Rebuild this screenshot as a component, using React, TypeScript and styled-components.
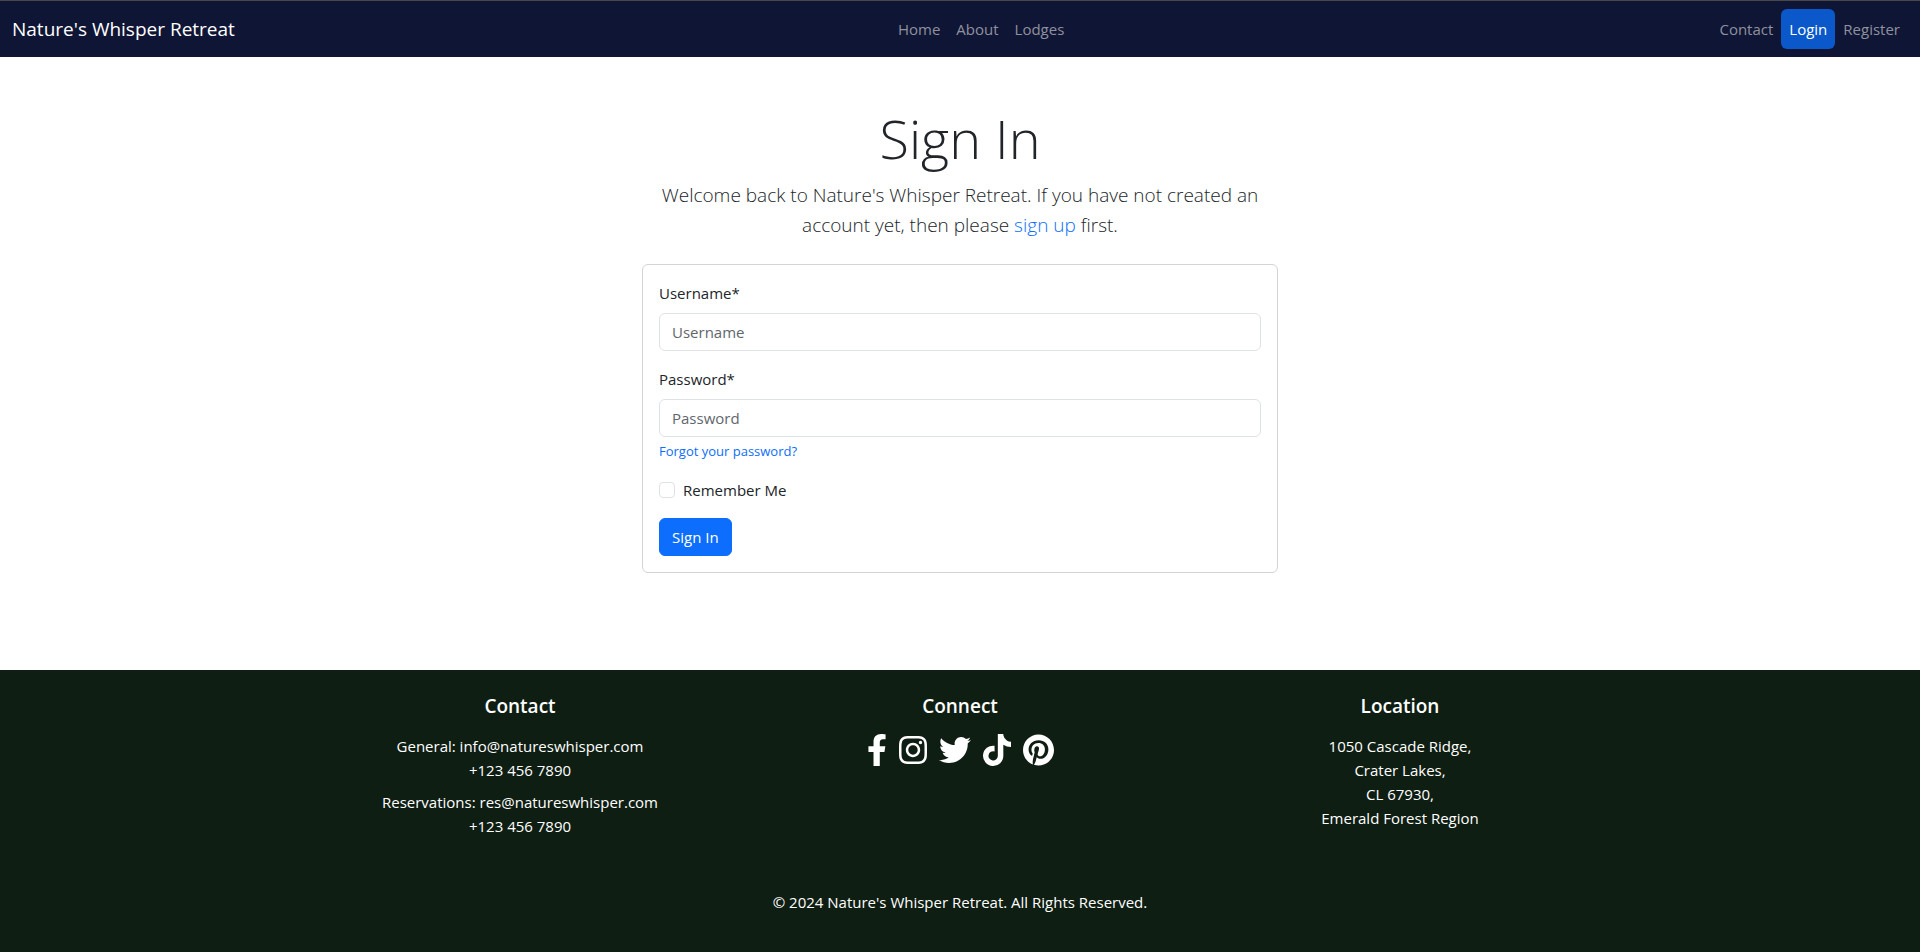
import React from 'react';
import styled, { createGlobalStyle } from 'styled-components';
import { FaFacebookF, FaInstagram, FaTwitter, FaTiktok, FaPinterest } from 'react-icons/fa';

const GlobalStyle = createGlobalStyle`
  *, *::before, *::after { box-sizing: border-box; }
  body {
    margin: 0;
    background: #fff;
    color: #212529;
    font-family: 'Segoe UI', 'Open Sans', 'Noto Sans', sans-serif;
    font-size: 15px;
    line-height: 24px;
  }
  a { text-decoration: none; }
`;

const Page = styled.div`
  display: flex;
  flex-direction: column;
  min-height: 100vh;
`;

const Navbar = styled.nav`
  display: flex;
  align-items: center;
  justify-content: space-between;
  padding: 8px 12px;
  border-top: 1px solid #484848;
  background: #0f1535;
`;

const Brand = styled.a`
  margin-right: 16px;
  color: #fff;
  font-size: 19px;
  line-height: 30px;
`;

const NavList = styled.ul`
  display: flex;
  margin: 0;
  padding: 0;
  list-style: none;
`;

const NavLink = styled.a<{ $active?: boolean }>`
  display: block;
  padding: 8px;
  border-radius: 6px;
  color: ${(p) => (p.$active ? '#fff' : '#8f919e')};
  background: ${(p) => (p.$active ? '#0a58ca' : 'transparent')};
`;

const Main = styled.main`
  flex: 1;
  width: 100%;
  max-width: 636px;
  margin: 0 auto;
  padding: 48px 0 96px;
`;

const Title = styled.h1`
  margin: 0 0 8px;
  font-size: 54px;
  font-weight: 300;
  line-height: 67px;
  text-align: center;
`;

const Lead = styled.p`
  margin: 0 0 24px;
  padding: 0 16px;
  font-size: 19px;
  font-weight: 300;
  line-height: 30px;
  text-align: center;
`;

const Link = styled.a`
  color: #0d6efd;
`;

const Form = styled.form`
  padding: 16px;
  border: 1px solid #d3d4d5;
  border-radius: 6px;
`;

const Field = styled.div`
  margin-bottom: 16px;
`;

const Label = styled.label`
  display: block;
  margin-bottom: 8px;
`;

const Input = styled.input`
  display: block;
  width: 100%;
  height: 38px;
  padding: 6px 12px;
  border: 1px solid #dee2e6;
  border-radius: 6px;
  background: #fff;
  color: #212529;
  font: inherit;
  &::placeholder { color: #5f666c; opacity: 1; }
`;

const HelpText = styled.div`
  padding-top: 4px;
  font-size: 13px;
  line-height: 21px;
`;

const CheckRow = styled.div`
  display: flex;
  align-items: center;
  gap: 8px;
  margin-bottom: 16px;
`;

const Checkbox = styled.input`
  appearance: none;
  width: 16px;
  height: 16px;
  margin: 0;
  border: 1px solid #dee2e6;
  border-radius: 4px;
  background: #fff;
  &:checked { background: #0d6efd; border-color: #0d6efd; }
`;

const SubmitButton = styled.button`
  height: 38px;
  padding: 6px 12px;
  border: 1px solid #0d6efd;
  border-radius: 6px;
  background: #0d6efd;
  color: #fff;
  font: inherit;
  cursor: pointer;
`;

const Footer = styled.footer`
  padding: 24px 0 38px;
  background: #0f1e12;
  color: #fff;
  text-align: center;
`;

const FooterColumns = styled.div`
  display: grid;
  grid-template-columns: repeat(3, 1fr);
  max-width: 1320px;
  margin: 0 auto;
  padding-bottom: 44px;
`;

const FooterHeading = styled.h2`
  margin: 0 0 16px;
  font-size: 19px;
  font-weight: 600;
  line-height: 24px;
`;

const FooterText = styled.p`
  margin: 0 0 8px;
`;

const SocialList = styled.div`
  display: flex;
  justify-content: center;
  gap: 12px;
`;

const SocialLink = styled.a<{ $width: number }>`
  color: #fff;
  svg {
    display: block;
    width: ${(p) => p.$width}px;
    height: 32px;
  }
`;

const socials = [
  { name: 'Facebook', Icon: FaFacebookF, width: 20 },
  { name: 'Instagram', Icon: FaInstagram, width: 28 },
  { name: 'Twitter', Icon: FaTwitter, width: 32 },
  { name: 'TikTok', Icon: FaTiktok, width: 28 },
  { name: 'Pinterest', Icon: FaPinterest, width: 31 },
];

export default function App() {
  return (
    <Page>
      <GlobalStyle />
      <Navbar>
        <Brand href="#">Nature's Whisper Retreat</Brand>
        <NavList>
          <li><NavLink href="#home">Home</NavLink></li>
          <li><NavLink href="#about">About</NavLink></li>
          <li><NavLink href="#lodges">Lodges</NavLink></li>
        </NavList>
        <NavList>
          <li><NavLink href="#contact">Contact</NavLink></li>
          <li><NavLink href="#login" $active>Login</NavLink></li>
          <li><NavLink href="#register">Register</NavLink></li>
        </NavList>
      </Navbar>
      <Main>
        <Title>Sign In</Title>
        <Lead>
          Welcome back to Nature's Whisper Retreat. If you have not created an account yet, then please{' '}
          <Link href="#register">sign up</Link> first.
        </Lead>
        <Form onSubmit={(e) => e.preventDefault()}>
          <Field>
            <Label htmlFor="username">Username*</Label>
            <Input id="username" type="text" placeholder="Username" />
          </Field>
          <Field>
            <Label htmlFor="password">Password*</Label>
            <Input id="password" type="password" placeholder="Password" />
            <HelpText><Link href="#reset">Forgot your password?</Link></HelpText>
          </Field>
          <CheckRow>
            <Checkbox id="remember" type="checkbox" />
            <label htmlFor="remember">Remember Me</label>
          </CheckRow>
          <SubmitButton type="submit">Sign In</SubmitButton>
        </Form>
      </Main>
      <Footer>
        <FooterColumns>
          <section>
            <FooterHeading>Contact</FooterHeading>
            <FooterText>General: info@natureswhisper.com<br />+123 456 7890</FooterText>
            <FooterText>Reservations: res@natureswhisper.com<br />+123 456 7890</FooterText>
          </section>
          <section>
            <FooterHeading>Connect</FooterHeading>
            <SocialList>
              {socials.map(({ name, Icon, width }) => (
                <SocialLink key={name} href={`#${name.toLowerCase()}`} aria-label={name} $width={width}>
                  <Icon />
                </SocialLink>
              ))}
            </SocialList>
          </section>
          <section>
            <FooterHeading>Location</FooterHeading>
            <FooterText>
              1050 Cascade Ridge,<br />Crater Lakes,<br />CL 67930,<br />Emerald Forest Region
            </FooterText>
          </section>
        </FooterColumns>
        <div>© 2024 Nature's Whisper Retreat. All Rights Reserved.</div>
      </Footer>
    </Page>
  );
}
